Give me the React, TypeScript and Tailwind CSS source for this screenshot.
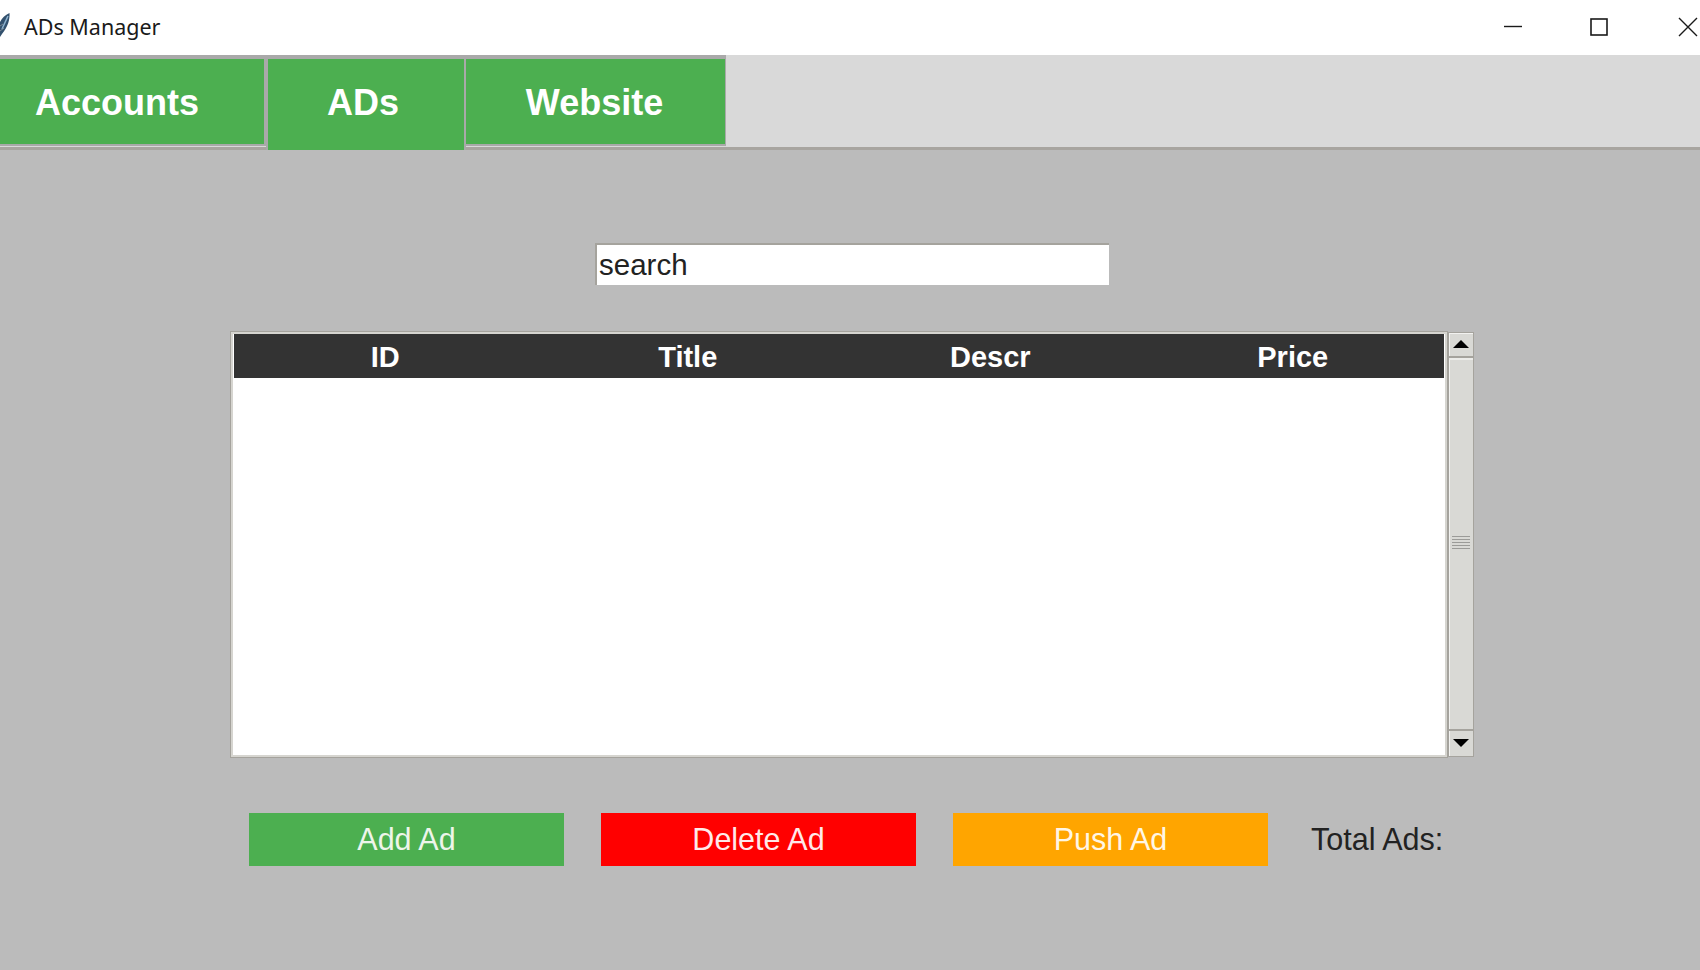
const arial = "font-['Liberation_Sans',Arial,sans-serif]";

function TitleBar() {
  return (
    <div className="h-[55px] bg-white flex items-center relative shrink-0">
      <svg width="10" height="28" viewBox="0 0 10 28" className="shrink-0 -mt-[3px]">
        <path d="M9.5 1 C10 7 8 15 2 22 L0 25 L0 10 C2 6 5 3 9.5 1Z" fill="#33516e" />
        <path d="M8 4 L2 17" stroke="#8fb4d0" strokeWidth="1.5" fill="none" />
        <path d="M0 14 L3 12 M0 19 L4 16" stroke="#7d8b96" strokeWidth="1" fill="none" />
      </svg>
      <div className="ml-[14px] -mt-[2px] text-[21.5px] text-[#1a1a1a] font-['Noto_Sans',sans-serif] leading-none">ADs Manager</div>
      <div className="ml-auto flex items-center h-full mr-[2px] -mt-[2px]">
        <svg width="18" height="18" viewBox="0 0 18 18" className="mr-[68px]">
          <path d="M0 8.5 H18" stroke="#1a1a1a" strokeWidth="1.4" />
        </svg>
        <svg width="18" height="18" viewBox="0 0 18 18" className="mr-[70px]">
          <rect x="1" y="1" width="16" height="16" fill="none" stroke="#1a1a1a" strokeWidth="1.6" />
        </svg>
        <svg width="20" height="20" viewBox="0 0 20 20">
          <path d="M1 1 L19 19 M19 1 L1 19" stroke="#1a1a1a" strokeWidth="1.4" />
        </svg>
      </div>
    </div>
  );
}

function Tabs() {
  return (
    <div className={`h-[95px] bg-[#d9d9d9] border-b-[3px] border-[#a8a5a0] shrink-0 flex items-start text-white font-bold text-[36px] ${arial}`}>
      <div className="w-[266px] h-[91px] bg-[#4caf50] border-t-[4px] border-r-[2px] border-b-[2px] border-[#a9a9a9] flex items-center justify-center pr-[30px] pt-[2px]">Accounts</div>
      <div className="w-[200px] h-[95px] bg-[#4caf50] border-t-[4px] border-x-[2px] border-[#a9a9a9] flex items-center justify-center pb-[4px] pr-[6px]">ADs</div>
      <div className="w-[260px] h-[91px] bg-[#4caf50] border-t-[4px] border-r-[1px] border-b-[2px] border-[#a9a9a9] flex items-center justify-center pr-[2px] pt-[2px]">Website</div>
    </div>
  );
}

function Scrollbar() {
  return (
    <div className="w-[26px] h-full flex flex-col border border-[#a5a39d] bg-[#d9d9d5] shadow-[inset_1px_1px_0_#f2f2f0]">
      <div className="h-[25px] shrink-0 border-b-2 border-[#a5a39d] flex items-center justify-center pb-[2px]">
        <div className="w-0 h-0 border-x-[8px] border-x-transparent border-b-[8px] border-b-black" />
      </div>
      <div className="flex-1 border-b-2 border-[#a5a39d] border-t-2 border-t-[#ecece9] flex flex-col items-center justify-center gap-[2px] pb-[4px]">
        <div className="w-[18px] h-[1px] bg-[#9b9b98]" />
        <div className="w-[18px] h-[1px] bg-[#9b9b98]" />
        <div className="w-[18px] h-[1px] bg-[#9b9b98]" />
        <div className="w-[18px] h-[1px] bg-[#9b9b98]" />
        <div className="w-[18px] h-[1px] bg-[#9b9b98]" />
      </div>
      <div className="h-[25px] shrink-0 flex items-center justify-center pb-[2px]">
        <div className="w-0 h-0 border-x-[8px] border-x-transparent border-t-[8px] border-t-black" />
      </div>
    </div>
  );
}

function AdsTable() {
  const columns = ["ID", "Title", "Descr", "Price"];
  return (
    <div className="mt-[47px] ml-[231px] w-[1243px] h-[425px] flex gap-[1px]">
      <div className="w-[1216px] h-full bg-white border-2 border-[#d6d5d0] outline outline-1 outline-[#a5a39d] flex flex-col">
        <div className={`h-[44px] mx-[1px] pt-[2px] bg-[#333333] grid grid-cols-4 items-center text-white font-bold text-[29px] ${arial}`}>
          {columns.map((col) => (
            <div key={col} className="text-center">{col}</div>
          ))}
        </div>
      </div>
      <Scrollbar />
    </div>
  );
}

function Actions() {
  const buttons = [
    { label: "Add Ad", cls: "bg-[#4caf50] text-[#eef5ea]" },
    { label: "Delete Ad", cls: "bg-[#ff0000] text-[#ffe9e9]" },
    { label: "Push Ad", cls: "bg-[#ffa500] text-[#fff6e6]" },
  ];
  return (
    <div className={`mt-[56px] ml-[249px] flex items-center gap-[37px] text-[30.5px] ${arial}`}>
      {buttons.map((b) => (
        <div key={b.label} className={`w-[315px] h-[53px] flex items-center justify-center ${b.cls}`}>{b.label}</div>
      ))}
      <div className="ml-[6px] text-[#222222]">Total Ads:</div>
    </div>
  );
}

export default function App() {
  return (
    <div className="w-[1700px] h-[970px] overflow-hidden flex flex-col bg-[#bbbbbb]">
      <TitleBar />
      <Tabs />
      <div className="flex-1 flex flex-col">
        <div className="mt-[93px] ml-[595px] w-[514px] h-[42px] bg-white border-t-2 border-l-2 border-[#a5a39d] flex items-center pl-[2px]">
          <span className={`text-[29.5px] text-[#222222] ${arial}`}>search</span>
        </div>
        <AdsTable />
        <Actions />
      </div>
    </div>
  );
}
